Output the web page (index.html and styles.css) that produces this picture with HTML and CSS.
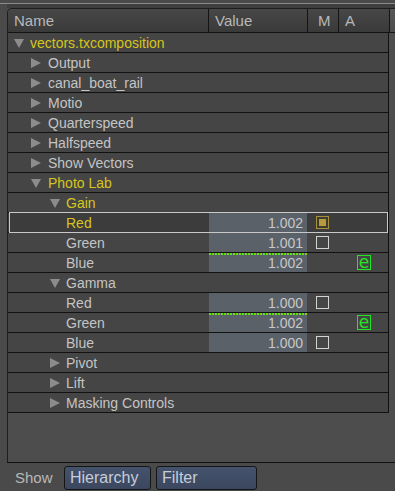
FILE: index.html
```html
<!DOCTYPE html>
<html>
<head>
<meta charset="utf-8">
<link rel="stylesheet" href="styles.css">
</head>
<body>
<div class="topbar"></div>
<div class="wrap">
  <div class="shade"></div>
  <div class="panel">
    <div class="header">
      <div class="h hname">Name</div>
      <div class="h hval">Value</div>
      <div class="h hm">M</div>
      <div class="h ha">A</div>
      <div class="h hrest"></div>
    </div>
    <div class="rows">
      <div class="row"><div class="name l0 yellow"><svg class="tri" viewBox="0 0 10 10"><polygon points="0,1 10,1 5,10"/></svg>vectors.txcomposition</div><div class="val"></div><div class="m"></div><div class="a"></div></div>
      <div class="row"><div class="name l1"><svg class="tri" viewBox="0 0 10 10"><polygon points="0,0 10,5 0,10"/></svg>Output</div><div class="val"></div><div class="m"></div><div class="a"></div></div>
      <div class="row"><div class="name l1"><svg class="tri" viewBox="0 0 10 10"><polygon points="0,0 10,5 0,10"/></svg>canal_boat_rail</div><div class="val"></div><div class="m"></div><div class="a"></div></div>
      <div class="row"><div class="name l1"><svg class="tri" viewBox="0 0 10 10"><polygon points="0,0 10,5 0,10"/></svg>Motio</div><div class="val"></div><div class="m"></div><div class="a"></div></div>
      <div class="row"><div class="name l1"><svg class="tri" viewBox="0 0 10 10"><polygon points="0,0 10,5 0,10"/></svg>Quarterspeed</div><div class="val"></div><div class="m"></div><div class="a"></div></div>
      <div class="row"><div class="name l1"><svg class="tri" viewBox="0 0 10 10"><polygon points="0,0 10,5 0,10"/></svg>Halfspeed</div><div class="val"></div><div class="m"></div><div class="a"></div></div>
      <div class="row"><div class="name l1"><svg class="tri" viewBox="0 0 10 10"><polygon points="0,0 10,5 0,10"/></svg>Show Vectors</div><div class="val"></div><div class="m"></div><div class="a"></div></div>
      <div class="row"><div class="name l1 yellow"><svg class="tri" viewBox="0 0 10 10"><polygon points="0,1 10,1 5,10"/></svg>Photo Lab</div><div class="val"></div><div class="m"></div><div class="a"></div></div>
      <div class="row"><div class="name l2 yellow"><svg class="tri" viewBox="0 0 10 10"><polygon points="0,1 10,1 5,10"/></svg>Gain</div><div class="val"></div><div class="m"></div><div class="a"></div></div>
      <div class="row selected"><div class="name leaf yellow">Red</div><div class="val num">1.002</div><div class="m"><span class="cb on"></span></div><div class="a"></div></div>
      <div class="row"><div class="name leaf">Green</div><div class="val num">1.001</div><div class="m"><span class="cb"></span></div><div class="a"></div></div>
      <div class="row"><div class="name leaf">Blue</div><div class="val num anim">1.002</div><div class="m"></div><div class="a"><span class="e">e</span></div></div>
      <div class="row"><div class="name l2"><svg class="tri" viewBox="0 0 10 10"><polygon points="0,1 10,1 5,10"/></svg>Gamma</div><div class="val"></div><div class="m"></div><div class="a"></div></div>
      <div class="row"><div class="name leaf">Red</div><div class="val num">1.000</div><div class="m"><span class="cb"></span></div><div class="a"></div></div>
      <div class="row"><div class="name leaf">Green</div><div class="val num anim">1.002</div><div class="m"></div><div class="a"><span class="e">e</span></div></div>
      <div class="row"><div class="name leaf">Blue</div><div class="val num">1.000</div><div class="m"><span class="cb"></span></div><div class="a"></div></div>
      <div class="row"><div class="name l2"><svg class="tri" viewBox="0 0 10 10"><polygon points="0,0 10,5 0,10"/></svg>Pivot</div><div class="val"></div><div class="m"></div><div class="a"></div></div>
      <div class="row"><div class="name l2"><svg class="tri" viewBox="0 0 10 10"><polygon points="0,0 10,5 0,10"/></svg>Lift</div><div class="val"></div><div class="m"></div><div class="a"></div></div>
      <div class="row"><div class="name l2"><svg class="tri" viewBox="0 0 10 10"><polygon points="0,0 10,5 0,10"/></svg>Masking Controls</div><div class="val"></div><div class="m"></div><div class="a"></div></div>
    </div>
  </div>
</div>
<div class="bottombar">
  <span class="show">Show</span>
  <span class="btn hier">Hierarchy</span>
  <span class="btn filter">Filter</span>
</div>
</body>
</html>
```
FILE: styles.css
```css
html, body {
  margin: 0;
  padding: 0;
}
body {
  width: 395px;
  height: 491px;
  overflow: hidden;
  background: #4a4a4a;
  font-family: "Liberation Sans", Arial, sans-serif;
  font-size: 14px;
  color: #c4c4c4;
}
.topbar {
  height: 3px;
  border-bottom: 1px solid #8a8a8a;
  background: #4a4a4a;
}
.wrap {
  padding-left: 7px;
}
.shade {
  height: 4px;
  background: #3e3e3e;
}
.panel {
  height: 453px;
  border-top: 1px solid #1e1e1e;
  border-left: 1px solid #1e1e1e;
  border-bottom: 1px solid #111;
  border-top-left-radius: 5px;
  background: #4d4d4d;
  display: flex;
  flex-direction: column;
  overflow: hidden;
}
.header {
  display: flex;
  height: 23px;
  border-bottom: 1px solid #141414;
  background: linear-gradient(#474747, #3a3a3a);
  font-size: 15px;
  color: #b8b8b8;
}
.h {
  box-sizing: border-box;
  border-right: 1px solid #141414;
  display: flex;
  align-items: center;
}
.hname { width: 201px; padding-left: 6px; }
.hval { width: 99px; padding-left: 6px; }
.hm { width: 31px; padding-left: 10px; }
.ha { width: 51px; padding-left: 6px; }
.hrest { flex: 1; border-right: none; background: linear-gradient(#575757, #4c4c4c); }

.rows {
  width: 380px;
  border-right: 1px solid #111;
}
.row {
  display: flex;
  height: 19px;
  border-bottom: 1px solid #111;
  background: #454545;
  position: relative;
}
.row > div {
  display: flex;
  align-items: center;
}
.name {
  width: 201px;
  box-sizing: border-box;
  white-space: nowrap;
}
.tri {
  width: 10px;
  height: 10px;
  fill: #8c8c8c;
  flex: none;
}
.l0 { padding-left: 6px; gap: 6px; }
.l1 { padding-left: 23px; gap: 7px; }
.l2 { padding-left: 42px; gap: 6px; }
.leaf { padding-left: 58px; }
.yellow { color: #d6c51c; }

.val {
  width: 98px;
  box-sizing: border-box;
  justify-content: flex-end;
  padding-right: 4px;
  position: relative;
}
.val.num {
  background: #5a6169;
  color: #c8c8c8;
}
.val.anim::before {
  content: "";
  position: absolute;
  left: 0;
  right: 0;
  top: 0;
  height: 2px;
  background: repeating-linear-gradient(to right, #6ae00c 0px, #6ae00c 2px, transparent 2px, transparent 3px);
}
.m {
  width: 31px;
  box-sizing: border-box;
  padding-left: 9px;
}
.a {
  width: 50px;
  box-sizing: border-box;
  padding-left: 19px;
}
.cb {
  width: 11px;
  height: 11px;
  border: 1px solid #d2d2d2;
  display: block;
  position: relative;
}
.cb.on {
  border-color: #a88f3c;
  background: #3f3c33;
}
.cb.on::after {
  content: "";
  position: absolute;
  left: 2px;
  top: 2px;
  width: 7px;
  height: 7px;
  background: #b79a3e;
}
.e {
  width: 12px;
  height: 13px;
  border: 1px solid #22e622;
  color: #22e622;
  font-family: "DejaVu Sans", sans-serif;
  font-size: 17px;
  line-height: 13px;
  text-align: center;
  display: block;
}
.selected {
  background: #3c3c3c;
}
.selected::after {
  content: "";
  position: absolute;
  left: 1px;
  right: 0;
  top: -1px;
  bottom: -1px;
  border: 1px solid #c8c8c8;
  pointer-events: none;
}

.bottombar {
  height: 28px;
  display: flex;
  align-items: center;
  padding-left: 15px;
  background: #4a4a4a;
}
.show {
  font-size: 15px;
  color: #b8b8b8;
  width: 49px;
}
.btn {
  box-sizing: border-box;
  height: 24px;
  margin-top: 2px;
  border: 1px solid #151515;
  border-radius: 3px;
  background: linear-gradient(#44526c, #3a475f);
  color: #c8cdd8;
  font-size: 16px;
  display: flex;
  align-items: center;
  padding-left: 5px;
}
.hier { width: 87px; }
.filter { width: 101px; margin-left: 5px; }
```
